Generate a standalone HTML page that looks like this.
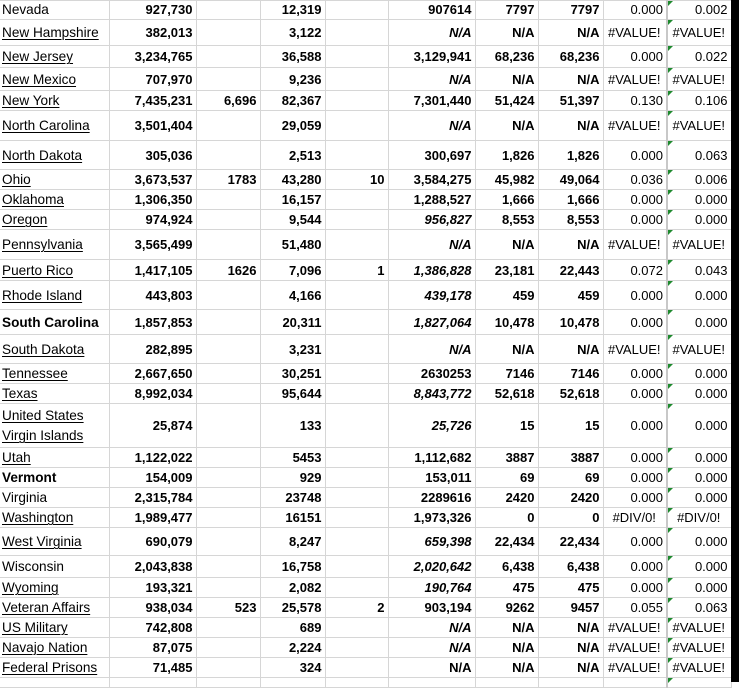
<!DOCTYPE html>
<html><head><meta charset="utf-8">
<style>
html,body{margin:0;padding:0;background:#fff;width:748px;height:682px;overflow:hidden}
table{position:absolute;left:0;top:0;border-collapse:collapse;table-layout:fixed;width:731px;font-family:"Liberation Sans",Arial,sans-serif;font-size:13px;color:#000}
td{border:1px solid #d6d6d6;padding:1px 3px 0 2px;vertical-align:middle;white-space:nowrap;overflow:hidden;line-height:16px;text-align:right;font-weight:bold}
td:first-child{text-align:left;font-weight:normal;border-left:none;font-size:13.6px}
td.a{text-decoration:underline;text-decoration-thickness:1px;text-underline-offset:2px}
td:nth-child(9),td:nth-child(10){font-weight:normal}
td:nth-child(9){border-right:2px solid #c8c8c8}
td:nth-child(10){position:relative}
td:nth-child(10)::before{content:"";position:absolute;left:0;top:0;border-top:5px solid #1e8a2e;border-right:5px solid transparent}
td.e{text-align:center}
i{font-style:italic}
.bar{position:absolute;left:731px;top:0;width:8px;height:682px;background:#000}
tr.f td{vertical-align:bottom;padding-bottom:1px}
</style></head><body>
<table>
<colgroup><col style="width:109px"><col style="width:87px"><col style="width:64px"><col style="width:65px"><col style="width:63px"><col style="width:87px"><col style="width:63px"><col style="width:65px"><col style="width:64px"><col style="width:64px"></colgroup>
<tr class="f" style="height:17px"><td>Nevada</td><td>927,730</td><td></td><td>12,319</td><td></td><td>907614</td><td>7797</td><td>7797</td><td>0.000</td><td>0.002</td></tr>
<tr style="height:26px"><td class="a">New Hampshire</td><td>382,013</td><td></td><td>3,122</td><td></td><td><i>N/A</i></td><td>N/A</td><td>N/A</td><td class="e">#VALUE!</td><td class="e">#VALUE!</td></tr>
<tr style="height:22px"><td class="a">New Jersey</td><td>3,234,765</td><td></td><td>36,588</td><td></td><td>3,129,941</td><td>68,236</td><td>68,236</td><td>0.000</td><td>0.022</td></tr>
<tr style="height:23px"><td class="a">New Mexico</td><td>707,970</td><td></td><td>9,236</td><td></td><td><i>N/A</i></td><td>N/A</td><td>N/A</td><td class="e">#VALUE!</td><td class="e">#VALUE!</td></tr>
<tr style="height:20px"><td class="a">New York</td><td>7,435,231</td><td>6,696</td><td>82,367</td><td></td><td>7,301,440</td><td>51,424</td><td>51,397</td><td>0.130</td><td>0.106</td></tr>
<tr style="height:30px"><td class="a">North Carolina</td><td>3,501,404</td><td></td><td>29,059</td><td></td><td><i>N/A</i></td><td>N/A</td><td>N/A</td><td class="e">#VALUE!</td><td class="e">#VALUE!</td></tr>
<tr style="height:29px"><td class="a">North Dakota</td><td>305,036</td><td></td><td>2,513</td><td></td><td>300,697</td><td>1,826</td><td>1,826</td><td>0.000</td><td>0.063</td></tr>
<tr style="height:20px"><td class="a">Ohio</td><td>3,673,537</td><td>1783</td><td>43,280</td><td>10</td><td>3,584,275</td><td>45,982</td><td>49,064</td><td>0.036</td><td>0.006</td></tr>
<tr style="height:20px"><td class="a">Oklahoma</td><td>1,306,350</td><td></td><td>16,157</td><td></td><td>1,288,527</td><td>1,666</td><td>1,666</td><td>0.000</td><td>0.000</td></tr>
<tr style="height:20px"><td class="a">Oregon</td><td>974,924</td><td></td><td>9,544</td><td></td><td><i>956,827</i></td><td>8,553</td><td>8,553</td><td>0.000</td><td>0.000</td></tr>
<tr style="height:30px"><td class="a">Pennsylvania</td><td>3,565,499</td><td></td><td>51,480</td><td></td><td><i>N/A</i></td><td>N/A</td><td>N/A</td><td class="e">#VALUE!</td><td class="e">#VALUE!</td></tr>
<tr style="height:21px"><td class="a">Puerto Rico</td><td>1,417,105</td><td>1626</td><td>7,096</td><td>1</td><td><i>1,386,828</i></td><td>23,181</td><td>22,443</td><td>0.072</td><td>0.043</td></tr>
<tr style="height:29px"><td class="a">Rhode Island</td><td>443,803</td><td></td><td>4,166</td><td></td><td><i>439,178</i></td><td>459</td><td>459</td><td>0.000</td><td>0.000</td></tr>
<tr style="height:25px"><td style="font-weight:bold">South Carolina</td><td>1,857,853</td><td></td><td>20,311</td><td></td><td><i>1,827,064</i></td><td>10,478</td><td>10,478</td><td>0.000</td><td>0.000</td></tr>
<tr style="height:29px"><td class="a">South Dakota</td><td>282,895</td><td></td><td>3,231</td><td></td><td><i>N/A</i></td><td>N/A</td><td>N/A</td><td class="e">#VALUE!</td><td class="e">#VALUE!</td></tr>
<tr style="height:20px"><td class="a">Tennessee</td><td>2,667,650</td><td></td><td>30,251</td><td></td><td>2630253</td><td>7146</td><td>7146</td><td>0.000</td><td>0.000</td></tr>
<tr style="height:20px"><td class="a">Texas</td><td>8,992,034</td><td></td><td>95,644</td><td></td><td><i>8,843,772</i></td><td>52,618</td><td>52,618</td><td>0.000</td><td>0.000</td></tr>
<tr style="height:44px"><td class="a" style="line-height:20px">United States<br>Virgin Islands</td><td>25,874</td><td></td><td>133</td><td></td><td><i>25,726</i></td><td>15</td><td>15</td><td>0.000</td><td>0.000</td></tr>
<tr style="height:20px"><td class="a">Utah</td><td>1,122,022</td><td></td><td>5453</td><td></td><td>1,112,682</td><td>3887</td><td>3887</td><td>0.000</td><td>0.000</td></tr>
<tr style="height:20px"><td style="font-weight:bold">Vermont</td><td>154,009</td><td></td><td>929</td><td></td><td>153,011</td><td>69</td><td>69</td><td>0.000</td><td>0.000</td></tr>
<tr style="height:20px"><td>Virginia</td><td>2,315,784</td><td></td><td>23748</td><td></td><td>2289616</td><td>2420</td><td>2420</td><td>0.000</td><td>0.000</td></tr>
<tr style="height:20px"><td class="a">Washington</td><td>1,989,477</td><td></td><td>16151</td><td></td><td>1,973,326</td><td>0</td><td>0</td><td class="e">#DIV/0!</td><td class="e">#DIV/0!</td></tr>
<tr style="height:28px"><td class="a">West Virginia</td><td>690,079</td><td></td><td>8,247</td><td></td><td><i>659,398</i></td><td>22,434</td><td>22,434</td><td>0.000</td><td>0.000</td></tr>
<tr style="height:22px"><td>Wisconsin</td><td>2,043,838</td><td></td><td>16,758</td><td></td><td><i>2,020,642</i></td><td>6,438</td><td>6,438</td><td>0.000</td><td>0.000</td></tr>
<tr style="height:20px"><td class="a">Wyoming</td><td>193,321</td><td></td><td>2,082</td><td></td><td><i>190,764</i></td><td>475</td><td>475</td><td>0.000</td><td>0.000</td></tr>
<tr style="height:20px"><td class="a">Veteran Affairs</td><td>938,034</td><td>523</td><td>25,578</td><td>2</td><td>903,194</td><td>9262</td><td>9457</td><td>0.055</td><td>0.063</td></tr>
<tr style="height:20px"><td class="a">US Military</td><td>742,808</td><td></td><td>689</td><td></td><td><i>N/A</i></td><td>N/A</td><td>N/A</td><td class="e">#VALUE!</td><td class="e">#VALUE!</td></tr>
<tr style="height:20px"><td class="a">Navajo Nation</td><td>87,075</td><td></td><td>2,224</td><td></td><td><i>N/A</i></td><td>N/A</td><td>N/A</td><td class="e">#VALUE!</td><td class="e">#VALUE!</td></tr>
<tr style="height:20px"><td class="a">Federal Prisons</td><td>71,485</td><td></td><td>324</td><td></td><td>N/A</td><td>N/A</td><td>N/A</td><td class="e">#VALUE!</td><td class="e">#VALUE!</td></tr>
<tr style="height:10px"><td></td><td></td><td></td><td></td><td></td><td></td><td></td><td></td><td></td><td></td></tr>
</table>
<div class="bar"></div>
</body></html>
